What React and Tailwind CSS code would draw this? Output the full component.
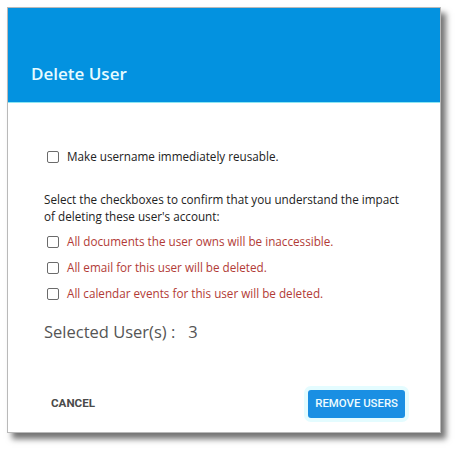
export default function App() {
  const Box = () => (
    <span className="inline-block w-[12px] h-[12px] rounded-[2px] border border-[#6b6b6b] bg-white shrink-0" />
  );
  const items = [
    "All documents the user owns will be inaccessible.",
    "All email for this user will be deleted.",
    "All calendar events for this user will be deleted.",
  ];
  return (
    <div className="w-[461px] h-[453px] bg-white pl-[7px] pt-[7px]">
      <div className="w-[434px] h-[426px] bg-white border border-[#b9b9b9] shadow-[5px_6px_6px_rgba(0,0,0,0.55)] flex flex-col font-['Open_Sans',sans-serif]">
        <div className="h-[95px] bg-[#0392e0] border-b border-[#8ee6f2] flex items-end pl-[23px] pb-[20px]">
          <h1 className="text-[17px] font-semibold text-[#e6fbff] leading-none">Delete User</h1>
        </div>
        <div className="pl-[36px] pr-[20px] pt-[45px] flex flex-col text-[11.7px] text-[#222]">
          <label className="flex items-center gap-[8px] ml-[3px] h-[18px]">
            <Box />
            <span>Make username immediately reusable.</span>
          </label>
          <p className="mt-[25px] leading-[17px]">
            Select the checkboxes to confirm that you understand the impact
            <br />
            of deleting these user's account:
          </p>
          <div className="mt-[8px] flex flex-col gap-[8px]">
            {items.map((t) => (
              <label key={t} className="flex items-center gap-[8px] ml-[3px] h-[18px] text-[#b23b36]">
                <Box />
                <span>{t}</span>
              </label>
            ))}
          </div>
          <div className="mt-[18px] text-[16.5px] text-[#555] leading-[22px]">
            Selected User(s) : &nbsp;&nbsp;3
          </div>
        </div>
        <div className="mt-auto flex items-center justify-between pl-[43px] pr-[35px] pb-[14px] font-['Roboto',sans-serif]">
          <button className="text-[11.6px] font-bold text-[#4a4a4a]">CANCEL</button>
          <button className="h-[28px] px-[7px] rounded-[3px] bg-[#1a8fe3] text-[#eefcff] text-[11.4px] font-medium ring-4 ring-[#e4fcff]">
            REMOVE USERS
          </button>
        </div>
      </div>
    </div>
  );
}
